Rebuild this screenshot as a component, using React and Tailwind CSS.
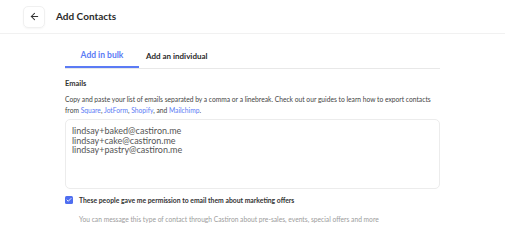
import { ArrowLeft, Check } from 'lucide-react'

export default function App() {
  return (
    <div className="w-[505px] h-[249px] bg-white text-[#2d2d2d] overflow-hidden" style={{ fontFamily: 'Lato, "Noto Sans", sans-serif' }}>
      {/* Header */}
      <div className="h-[34px] flex items-center pl-[23px] border-b border-[#f1f1f1]">
        <button className="w-[22px] h-[22px] flex items-center justify-center rounded-[5px] border border-[#f0f0f0] shadow-[0_1px_2px_rgba(0,0,0,0.04)]">
          <ArrowLeft size={11} strokeWidth={2.2} className="text-[#333]" />
        </button>
        <h1 className="ml-[11px] text-[10px] font-bold text-[#2b2b2b]">Add Contacts</h1>
      </div>

      <div className="ml-[65px] w-[375px]">
        {/* Tabs */}
        <div className="mt-[10px] flex border-b border-[#e8e8e8]">
          <div className="w-[74px] h-[24px] flex items-center justify-center text-[8.5px] font-bold text-[#5b7bf5] border-b-2 border-[#5b7bf5] -mb-px">
            Add in bulk
          </div>
          <div className="h-[24px] pl-[7px] flex items-center text-[8px] font-bold text-[#2b2b2b]">
            Add an individual
          </div>
        </div>

        {/* Emails */}
        <div className="mt-[10px] text-[7.5px] font-bold text-[#333] leading-[10px]">Emails</div>
        <p className="mt-[5px] text-[6.7px] leading-[10.5px] text-[#444]">
          Copy and paste your list of emails separated by a comma or a linebreak. Check out our guides to learn how to export contacts from <span className="text-[#5b7bf5]">Square</span>, <span className="text-[#5b7bf5]">JotForm</span>, <span className="text-[#5b7bf5]">Shopify</span>, and <span className="text-[#5b7bf5]">Mailchimp</span>.
        </p>

        <div className="mt-[4px] h-[70px] rounded-[5px] border border-[#ececec] px-[6px] pt-[6px] text-[9px] leading-[9.5px] text-[#555]">
          <div>lindsay+baked@castiron.me</div>
          <div>lindsay+cake@castiron.me</div>
          <div>lindsay+pastry@castiron.me</div>
        </div>

        {/* Permission */}
        <div className="mt-[6px] flex items-center">
          <div className="w-[8px] h-[8px] rounded-[1.5px] bg-[#4f6ef0] flex items-center justify-center">
            <Check size={6} strokeWidth={3.5} className="text-white" />
          </div>
          <span className="ml-[6px] text-[6.8px] font-bold text-[#333]">
            These people gave me permission to email them about marketing offers
          </span>
        </div>
        <p className="mt-[9px] ml-[14px] text-[6.7px] text-[#9c9c9c]">
          You can message this type of contact through Castiron about pre-sales, events, special offers and more
        </p>
      </div>
    </div>
  )
}
